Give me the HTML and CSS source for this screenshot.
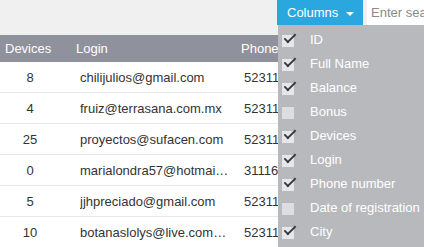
FILE: index.html
```html
<!DOCTYPE html>
<html>
<head>
<meta charset="utf-8">
<link rel="stylesheet" href="styles.css">
</head>
<body>
<div class="page">
  <div class="toolbar">
    <button class="columns-btn">Columns <span class="caret"></span></button>
    <input class="search" type="text" placeholder="Enter search">
  </div>
  <table class="grid">
    <colgroup>
      <col class="c-dev"><col class="c-login"><col class="c-phone"><col class="c-rest">
    </colgroup>
    <thead>
      <tr><th class="dev">Devices</th><th class="login">Login</th><th class="phone">Phone number</th><th></th></tr>
    </thead>
    <tbody>
      <tr><td class="dev">8</td><td class="login"><div class="cut">chilijulios@gmail.com</div></td><td class="phone">5231123456</td><td></td></tr>
      <tr><td class="dev">4</td><td class="login"><div class="cut">fruiz@terrasana.com.mx</div></td><td class="phone">5231187654</td><td></td></tr>
      <tr><td class="dev">25</td><td class="login"><div class="cut">proyectos@sufacen.com</div></td><td class="phone">5231145678</td><td></td></tr>
      <tr><td class="dev">0</td><td class="login"><div class="cut">marialondra57@hotmail.com</div></td><td class="phone">3111654321</td><td></td></tr>
      <tr><td class="dev">5</td><td class="login"><div class="cut">jjhpreciado@gmail.com</div></td><td class="phone">5231134567</td><td></td></tr>
      <tr><td class="dev">10</td><td class="login"><div class="cut">botanaslolys@live.com.mx</div></td><td class="phone">5231176543</td><td></td></tr>
    </tbody>
  </table>
  <ul class="menu">
    <li><span class="cb on"></span>ID</li>
    <li><span class="cb on"></span>Full Name</li>
    <li><span class="cb on"></span>Balance</li>
    <li><span class="cb"></span>Bonus</li>
    <li><span class="cb on"></span>Devices</li>
    <li><span class="cb on"></span>Login</li>
    <li><span class="cb on"></span>Phone number</li>
    <li><span class="cb"></span>Date of registration</li>
    <li><span class="cb on"></span>City</li>
  </ul>
</div>
</body>
</html>
```
FILE: styles.css
```css
html, body {
  margin: 0;
  padding: 0;
  background: #f0f0f0;
  font-family: "Liberation Sans", Arial, sans-serif;
  font-size: 13px;
  color: #333;
  overflow: hidden;
  width: 424px;
  height: 247px;
}
.page {
  position: relative;
  width: 424px;
  height: 247px;
  overflow: hidden;
}
.toolbar {
  height: 35px;
  display: flex;
  align-items: flex-start;
  padding-left: 277px;
  gap: 4px;
}
.columns-btn {
  height: 25px;
  width: 86px;
  margin: 0;
  border: 0;
  background: #2aa7df;
  color: #fff;
  font-family: "Liberation Sans", Arial, sans-serif;
  font-size: 13px;
  padding: 0 0 0 10px;
  text-align: left;
  display: flex;
  align-items: center;
  flex: none;
}
.caret {
  display: inline-block;
  width: 0;
  height: 0;
  margin-left: 8px;
  margin-top: 2px;
  border-left: 4px solid transparent;
  border-right: 4px solid transparent;
  border-top: 4px solid #fff;
}
.search {
  height: 25px;
  width: 120px;
  box-sizing: border-box;
  border: 0;
  margin: 0;
  background: #fff;
  padding: 0 0 0 4px;
  font-family: "Liberation Sans", Arial, sans-serif;
  font-size: 13px;
  flex: none;
}
.search::placeholder {
  color: #8a8a8a;
}
.grid {
  border-collapse: collapse;
  table-layout: fixed;
  width: 640px;
}
.c-dev { width: 70px; }
.c-login { width: 166px; }
.c-phone { width: 160px; }
.grid th {
  background: #8f919d;
  color: #fff;
  font-weight: normal;
  height: 27px;
  padding: 0;
  text-align: left;
  white-space: nowrap;
}
.grid th.dev { text-align: left; padding-left: 5px; }
.grid th.login { padding-left: 6px; }
.grid th.phone { padding-left: 5px; }
.grid td {
  background: #fff;
  height: 30px;
  padding: 0;
  border-bottom: 1px solid #e8e8e8;
  white-space: nowrap;
}
.grid td.dev { text-align: center; padding-right: 10px; }
.grid td.login { padding-left: 10px; }
.grid td.phone { padding-left: 8px; }
.cut {
  width: 149px;
  overflow: hidden;
  text-overflow: ellipsis;
  white-space: nowrap;
}
.menu {
  position: absolute;
  left: 278px;
  top: 25px;
  width: 160px;
  height: 240px;
  margin: 0;
  padding: 2px 0 0 0;
  list-style: none;
  background: #b8b9bd;
  color: #fff;
}
.menu li {
  height: 24px;
  display: flex;
  align-items: center;
  padding-left: 4px;
}
.cb {
  width: 12px;
  height: 12px;
  margin-right: 16px;
  margin-top: 4px;
  background: #dcdde0;
  position: relative;
  flex: none;
}
.cb.on {
  background: #e6e7e9;
}
.cb.on::after {
  content: "";
  position: absolute;
  left: 2px;
  top: -1px;
  width: 10px;
  height: 4px;
  border-left: 2.5px solid #3c3c3c;
  border-bottom: 2.5px solid #3c3c3c;
  transform: rotate(-45deg);
}
```
